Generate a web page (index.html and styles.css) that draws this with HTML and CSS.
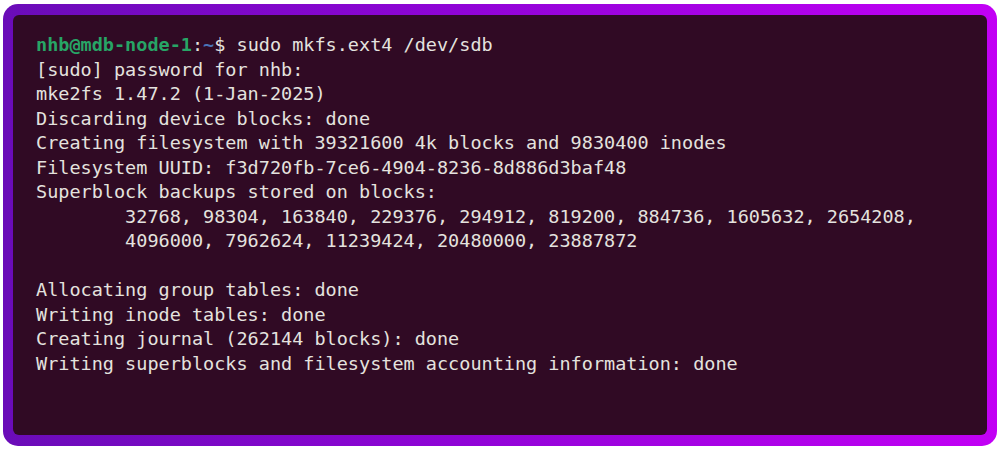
FILE: index.html
```html
<!DOCTYPE html>
<html>
<head>
<meta charset="utf-8">
<link rel="stylesheet" href="styles.css">
</head>
<body>
<div class="frame">
<div class="term"><pre class="out"><span class="user">nhb@mdb-node-1</span>:<span class="path">~</span>$ sudo mkfs.ext4 /dev/sdb
[sudo] password for nhb:
mke2fs 1.47.2 (1-Jan-2025)
Discarding device blocks: done
Creating filesystem with 39321600 4k blocks and 9830400 inodes
Filesystem UUID: f3d720fb-7ce6-4904-8236-8d886d3baf48
Superblock backups stored on blocks:
        32768, 98304, 163840, 229376, 294912, 819200, 884736, 1605632, 2654208,
        4096000, 7962624, 11239424, 20480000, 23887872

Allocating group tables: done
Writing inode tables: done
Creating journal (262144 blocks): done
Writing superblocks and filesystem accounting information: done</pre></div>
</div>
</body>
</html>
```
FILE: styles.css
```css
html, body {
  margin: 0;
  padding: 0;
  background: #ffffff;
}
body {
  width: 1000px;
  height: 450px;
  padding: 4px 3px;
  box-sizing: border-box;
}
.frame {
  height: 442px;
  box-sizing: border-box;
  padding: 11px 10px;
  border-radius: 15px;
  background: linear-gradient(90deg, #6a0cb8 0%, #8f04d6 45%, #c200f5 100%);
}
.term {
  height: 100%;
  box-sizing: border-box;
  background: #300a24;
  border-radius: 6px;
  padding: 18px 0 0 23px;
}
.out {
  margin: 0;
  font-family: "DejaVu Sans Mono", "Liberation Mono", monospace;
  font-size: 18.5px;
  line-height: 24.5px;
  color: #e4e2df;
  white-space: pre;
}
.user {
  color: #27a566;
  font-weight: bold;
}
.path {
  color: #4a74b8;
  font-weight: bold;
}
```
